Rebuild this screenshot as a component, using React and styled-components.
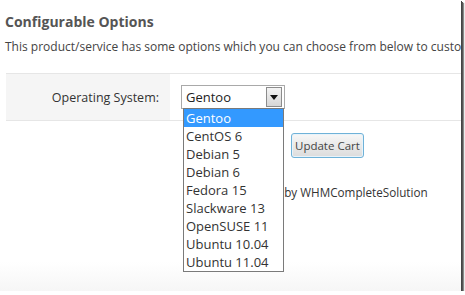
import React from 'react'
import styled, { createGlobalStyle } from 'styled-components'

const GlobalStyle = createGlobalStyle`
    html, body {
        margin: 0;
        padding: 0;
        background: #ffffff;
    }
    body {
        font-family: "Open Sans", "DejaVu Sans", sans-serif;
    }
`

const Frame = styled.div`
    position: relative;
    width: 461px;
    height: 291px;
    box-sizing: border-box;
    padding: 13px 0 0 5px;
    background: linear-gradient(to bottom, #ffffff 0%, #ffffff 90%, #f6f6f6 100%);
    box-shadow: 1px 1px 0 #444444, 2px 2px 0 #555555, 3px 3px 1px #8a8a8a;
    overflow: hidden;
`

const Title = styled.h2`
    margin: 0;
    font-size: 14px;
    font-weight: 700;
    color: #555555;
    line-height: 18px;
`

const Intro = styled.p`
    margin: 8px 0 0 0;
    font-size: 12px;
    color: #444444;
    white-space: nowrap;
    line-height: 16px;
`

const OptionTable = styled.div`
    display: grid;
    grid-template-columns: 164px 1fr;
    margin: 18px 0 0 1px;
    height: 46px;
    border-top: 1px solid #e6e6e6;
    border-bottom: 1px solid #e6e6e6;
`

const LabelCell = styled.div`
    background: #f5f5f5;
    display: flex;
    align-items: center;
    justify-content: flex-end;
    padding-right: 11px;
    font-size: 12.5px;
    color: #333333;
`

const ValueCell = styled.div`
    position: relative;
    display: flex;
    align-items: center;
    padding-left: 11px;
`

const Select = styled.div`
    position: relative;
    width: 104px;
    height: 24px;
    box-sizing: border-box;
    border: 1px solid #a9a9a9;
    display: flex;
    align-items: center;
    justify-content: space-between;
    padding: 0 2px 0 4px;
    font-size: 13px;
    color: #222222;
    background: #ffffff;
`

const Arrow = styled.div`
    width: 16px;
    height: 20px;
    box-sizing: border-box;
    border: 1px solid #8c8c8c;
    background: linear-gradient(to bottom, #f4f4f4, #d6d6d6);
    display: flex;
    align-items: center;
    justify-content: center;
`

const DropList = styled.ul`
    position: absolute;
    left: 1px;
    top: 22px;
    z-index: 2;
    width: 101px;
    margin: 0;
    padding: 0;
    list-style: none;
    box-sizing: border-box;
    border: 1px solid #7a7a7a;
    background: #ffffff;
`

const Item = styled.li`
    height: 18px;
    line-height: 18px;
    padding-left: 2px;
    font-size: 13px;
    color: ${props => props.active ? '#ffffff' : '#333333'};
    background: ${props => props.active ? '#3399ff' : 'transparent'};
`

const Actions = styled.div`
    padding: 12px 0 0 286px;
`

const Button = styled.button`
    height: 25px;
    padding: 0 3px;
    font-family: inherit;
    font-size: 11.5px;
    color: #444444;
    border: 1px solid #6fb2d8;
    border-radius: 3px;
    background: linear-gradient(to bottom, #f7f7f7, #dcdcdc);
    box-shadow: inset 0 0 0 1px #e8f3fa;
`

const Footer = styled.p`
    margin: 26px 0 0 0;
    padding-left: 228px;
    font-size: 11.7px;
    color: #333333;
    white-space: nowrap;
`

const systems = ['Gentoo', 'CentOS 6', 'Debian 5', 'Debian 6', 'Fedora 15', 'Slackware 13', 'OpenSUSE 11', 'Ubuntu 10.04', 'Ubuntu 11.04']

export const App = () => {
    return (
        <Frame>
            <GlobalStyle />
            <Title>Configurable Options</Title>
            <Intro>This product/service has some options which you can choose from below to customise your order.</Intro>
            <OptionTable>
                <LabelCell>Operating System:</LabelCell>
                <ValueCell>
                    <Select>
                        <span>Gentoo</span>
                        <Arrow>
                            <svg width="8" height="5" viewBox="0 0 8 5"><path d="M0 0h8L4 5z" fill="#111" /></svg>
                        </Arrow>
                        <DropList>
                            {systems.map((s, i) => <Item key={s} active={i === 0}>{s}</Item>)}
                        </DropList>
                    </Select>
                </ValueCell>
            </OptionTable>
            <Actions>
                <Button type="button">Update Cart</Button>
            </Actions>
            <Footer>Powered by WHMCompleteSolution</Footer>
        </Frame>
    )
}

export default App
